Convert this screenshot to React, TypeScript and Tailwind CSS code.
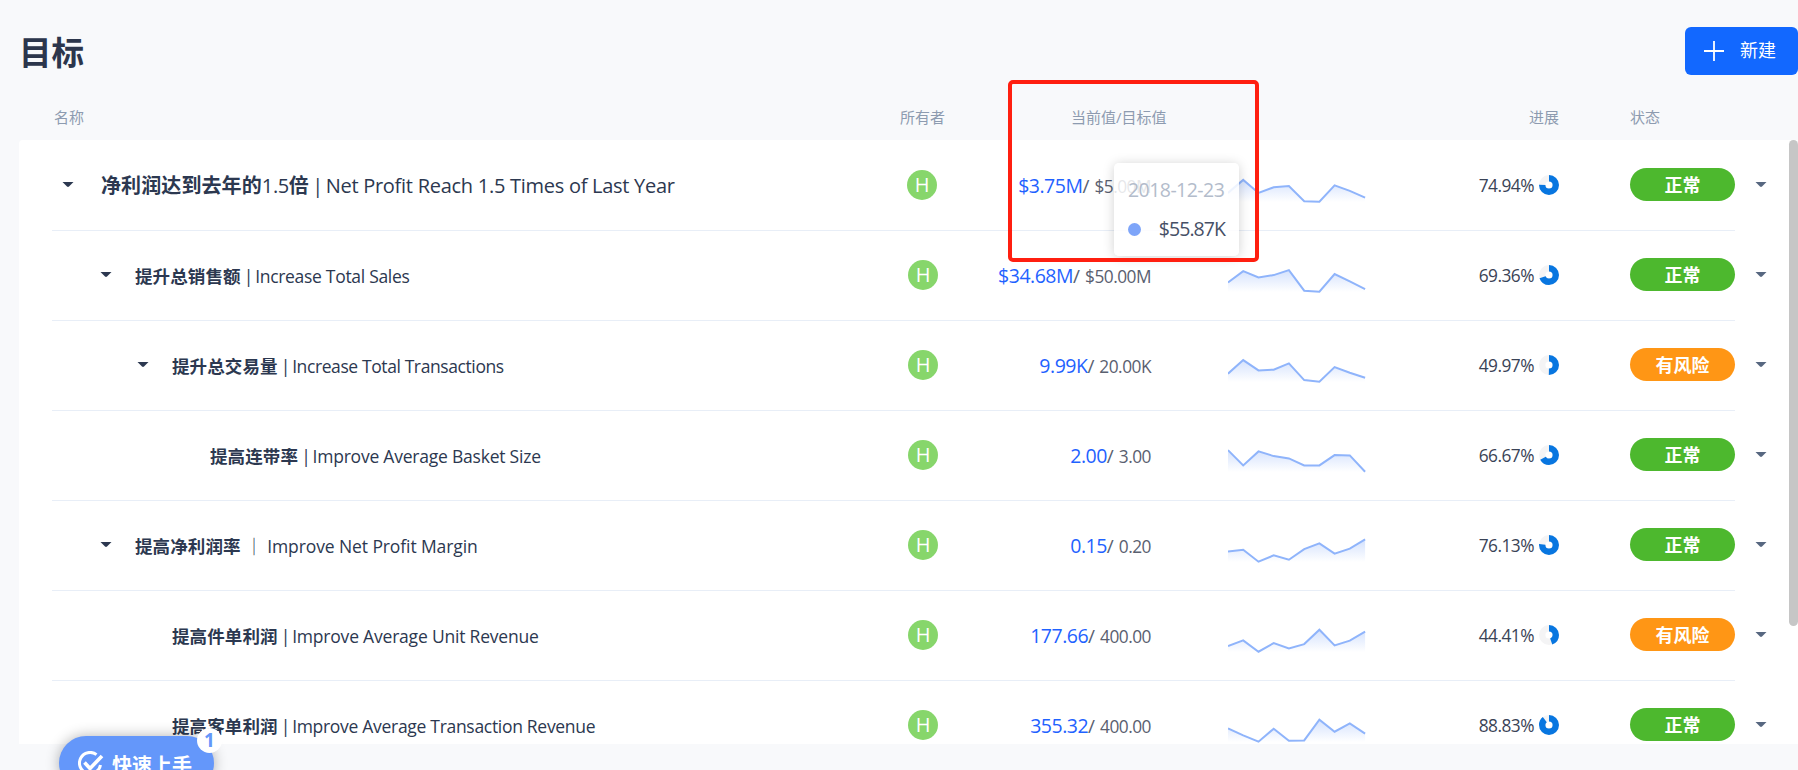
import clsx from "clsx";

type Goal = {
  level: number;
  zh: string;
  zhTail?: [string, string];
  sep: string;
  en: string;
  spacing?: string;
  leaf?: boolean;
  current: string;
  target: string;
  percent: number;
  risk?: boolean;
  trend: number[];
};

const goals: Goal[] = [
  {
    level: 0,
    zh: "净利润达到去年的",
    zhTail: ["1.5", "倍"],
    sep: " | ",
    en: "Net Profit Reach 1.5 Times of Last Year",
    spacing: "tracking-[-0.27px]",
    current: "$3.75M",
    target: "$5.00M",
    percent: 74.94,
    trend: [52.5, 39.5, 52.5, 46.8, 45.7, 60.9, 61.3, 45, 50.5, 57.2],
  },
  {
    level: 1,
    zh: "提升总销售额",
    sep: " | ",
    en: "Increase Total Sales",
    current: "$34.68M",
    target: "$50.00M",
    percent: 69.36,
    trend: [52, 40.7, 47, 44.7, 39.7, 60.3, 61.3, 43.7, 51, 58.7],
  },
  {
    level: 2,
    zh: "提升总交易量",
    sep: " | ",
    en: "Increase Total Transactions",
    spacing: "tracking-[-0.4px]",
    current: "9.99K",
    target: "20.00K",
    percent: 49.97,
    risk: true,
    trend: [53.3, 39.7, 50, 49.3, 43, 59.7, 61.3, 46.7, 52.3, 57.3],
  },
  {
    level: 3,
    zh: "提高连带率",
    sep: " | ",
    en: "Improve Average Basket Size",
    spacing: "tracking-[-0.22px]",
    leaf: true,
    current: "2.00",
    target: "3.00",
    percent: 66.67,
    trend: [39.7, 55, 41, 45.7, 48, 55, 55, 44.7, 45, 61.3],
  },
  {
    level: 1,
    zh: "提高净利润率",
    sep: " ｜ ",
    en: "Improve Net Profit Margin",
    spacing: "tracking-[-0.1px]",
    current: "0.15",
    target: "0.20",
    percent: 76.13,
    trend: [51, 49.3, 61.3, 55, 59.3, 48.7, 43, 53.3, 48.3, 39],
  },
  {
    level: 2,
    zh: "提高件单利润",
    sep: " | ",
    en: "Improve Average Unit Revenue",
    spacing: "tracking-[-0.2px]",
    leaf: true,
    current: "177.66",
    target: "400.00",
    percent: 44.41,
    risk: true,
    trend: [55.7, 50, 61.3, 52.7, 58, 53.7, 39.3, 55, 50.3, 41.3],
  },
  {
    level: 2,
    zh: "提高客单利润",
    sep: " | ",
    en: "Improve Average Transaction Revenue",
    leaf: true,
    current: "355.32",
    target: "400.00",
    percent: 88.83,
    trend: [48, 55, 61.3, 48.3, 60.3, 60, 39.3, 51.3, 43, 53.3],
  },
];

const indents = ["pl-[10px]", "pl-[48px]", "pl-[85px]", "pl-[123px]"];

function Caret({ className }: { className?: string }) {
  return (
    <svg viewBox="0 0 12 6" className={clsx("h-1.5 w-3 shrink-0", className)} fill="currentColor">
      <path d="M.5 0h11L7 4.6q-1 .9-2 0z" />
    </svg>
  );
}

function Sparkline({ id, values }: { id: string; values: number[] }) {
  const pts = values.map((v, i) => `${(i * 15.23).toFixed(1)},${(v - 35.6).toFixed(1)}`);
  return (
    <svg viewBox="0 0 138 28" className="mt-[36px] h-7 w-[138px] shrink-0 self-start">
      <defs>
        <linearGradient id={id} gradientUnits="userSpaceOnUse" x1="0" y1="3" x2="0" y2="26">
          <stop offset="0" stopColor="#d3e1fd" />
          <stop offset="1" stopColor="#ffffff" />
        </linearGradient>
      </defs>
      <polygon points={`0,26 ${pts.join(" ")} 137.1,26`} fill={`url(#${id})`} />
      <polyline points={pts.join(" ")} fill="none" stroke="#8fb4fb" strokeWidth="2" />
    </svg>
  );
}

function ProgressPie({ percent }: { percent: number }) {
  const c = 2 * Math.PI * 6.8;
  return (
    <svg viewBox="0 0 20 20" className="size-5 shrink-0">
      <circle cx="10" cy="10" r="6.8" fill="none" stroke="#f4f4f5" strokeWidth="6.4" />
      <circle
        cx="10"
        cy="10"
        r="6.8"
        fill="none"
        stroke="#0876e0"
        strokeWidth="6.4"
        strokeDasharray={`${(c * percent) / 100} ${c}`}
        transform="rotate(-90 10 10)"
      />
    </svg>
  );
}

function GoalRow({ goal, index }: { goal: Goal; index: number }) {
  const root = goal.level === 0;
  return (
    <li className="relative flex h-[90px] shrink-0 items-center">
      <div className={clsx("flex items-center", root ? "w-[855px]" : "w-[856px]", indents[goal.level])}>
        <Caret className={clsx("mr-[27px] -mt-px text-[#2c3850]", goal.leaf && "invisible")} />
        <p
          className={clsx(
            "mt-0.5 whitespace-pre text-[#2c3850]",
            root ? "text-[20px] tracking-[-0.37px]" : "-ml-[4px] text-[17.5px] tracking-[-0.3px]",
          )}
        >
          <span className="font-bold tracking-[0.1px]">{goal.zh}</span>
          {goal.zhTail ? (
            <>
              {goal.zhTail[0]}
              <span className="font-bold">{goal.zhTail[1]}</span>
            </>
          ) : null}
          <span className={goal.sep === " | " ? "tracking-[-1.4px]" : "tracking-normal"}>{goal.sep}</span>
          <span className={goal.spacing}>{goal.en}</span>
        </p>
      </div>
      <span className="flex size-[30px] items-center justify-center rounded-full bg-[#87d66b] text-[20px] text-white">
        H
      </span>
      <p
        className={clsx(
          "mt-0.5 text-right text-[17.3px] tracking-[-0.5px] whitespace-nowrap text-[#5a6070]",
          root ? "w-[214px]" : "w-[213px]",
        )}
      >
        <span className="text-[19.5px] tracking-[-0.5px] text-[#1f62ff]">{goal.current}</span>
        <span className="mr-px text-[19px] tracking-normal">/</span> {goal.target}
      </p>
      <div className="ml-[77px] self-stretch">
        <Sparkline id={`trend-${index}`} values={goal.trend} />
      </div>
      <div className="flex w-[193px] items-center justify-end gap-[5px]">
        <span className="mt-0.5 text-[17.3px] tracking-[-0.5px] text-[#3a4356]">{goal.percent.toFixed(2)}%</span>
        <ProgressPie percent={goal.percent} />
      </div>
      <span
        className={clsx(
          "ml-[71px] -mt-px flex h-[33px] w-[105px] items-center justify-center rounded-full pt-0.5 text-[18px] font-bold text-white",
          goal.risk ? "bg-[#ff9615]" : "bg-[#4db82e]",
        )}
      >
        {goal.risk ? "有风险" : "正常"}
      </span>
      <Caret className="ml-5 text-[#576780]" />
      <i className="absolute bottom-[-1px] left-0 h-px w-[1683px] bg-[#e8eef7]" />
    </li>
  );
}

function TrendTooltip() {
  return (
    <div className="absolute top-[163px] left-[1114px] flex h-[93px] w-[125px] flex-col rounded-[5px] bg-white/85 px-3.5 pt-[13px] shadow-[0_1px_12px_rgba(0,0,0,0.18)]">
      <span className="text-[19.5px] leading-7 tracking-[-0.55px] whitespace-nowrap text-[#b3bccb]">2018-12-23</span>
      <div className="mt-[11px] flex items-center justify-between leading-7">
        <i className="size-[13px] rounded-full bg-[#7ea5f9]" />
        <span className="text-[19.5px] tracking-[-0.95px] text-[#464f66]">$55.87K</span>
      </div>
    </div>
  );
}

function QuickStart() {
  return (
    <div className="absolute top-[736px] left-[59px] flex h-[54px] w-[155px] items-start rounded-full bg-[#6497fa] pt-3 pl-[19px] text-white shadow-[0_0_14px_rgba(0,0,0,0.3)]">
      <svg viewBox="0 0 26 26" className="mt-[3px] size-[26px]" fill="none" stroke="currentColor" strokeWidth="3">
        <path d="M18.5 3.6A10.6 10.6 0 1 0 22.5 14" />
        <path d="m6.5 11.5 5.5 6L24 5" strokeWidth="3.6" />
      </svg>
      <span className="ml-2 text-[20px] leading-9 font-bold">快速上手</span>
      <span className="absolute -top-2 left-[138px] flex size-[25px] items-center justify-center rounded-full bg-white text-[19px] font-bold text-[#6497fa]">
        1
      </span>
    </div>
  );
}

export default function App() {
  return (
    <main className="relative flex h-[770px] w-[1798px] flex-col overflow-hidden bg-[#f8f9fb] font-['Open_Sans','Noto_Sans_CJK_SC',sans-serif]">
      <header className="flex h-[96px] shrink-0 items-start justify-between">
        <h1 className="mt-[29px] ml-[19px] text-[32.5px] leading-[48px] font-bold text-[#2c364c]">目标</h1>
        <button className="mt-[27px] flex h-12 w-[113px] items-center rounded-md bg-[#1268ff] pl-[19px] text-[18px] text-white">
          <svg viewBox="0 0 20 20" className="size-5" stroke="currentColor" strokeWidth="1.8">
            <path d="M10 0v20M0 10h20" />
          </svg>
          <span className="ml-4 pb-0.5">新建</span>
        </button>
      </header>
      <div className="flex h-11 shrink-0 items-center pb-0.5 pl-[54px] text-[15px] leading-5 text-[#8d9bb0]">
        <span className="w-[846px]">名称</span>
        <span className="w-[171px]">所有者</span>
        <span className="w-[458px]">当前值/目标值</span>
        <span className="w-[101px]">进展</span>
        <span>状态</span>
      </div>
      <div className="ml-[19px] flex h-[604px] shrink-0 justify-between overflow-hidden rounded-tl bg-white pl-[33px]">
        <ul className="w-[1720px] shrink-0">
          {goals.map((goal, i) => (
            <GoalRow key={goal.en} goal={goal} index={i} />
          ))}
        </ul>
        <div className="h-[486px] w-[9px] rounded-full bg-[#c6c6c6]" />
      </div>
      <TrendTooltip />
      <div className="absolute top-[80px] left-[1008px] h-[182px] w-[251px] rounded-[5px] border-4 border-[#ff1f10]" />
      <QuickStart />
    </main>
  );
}
